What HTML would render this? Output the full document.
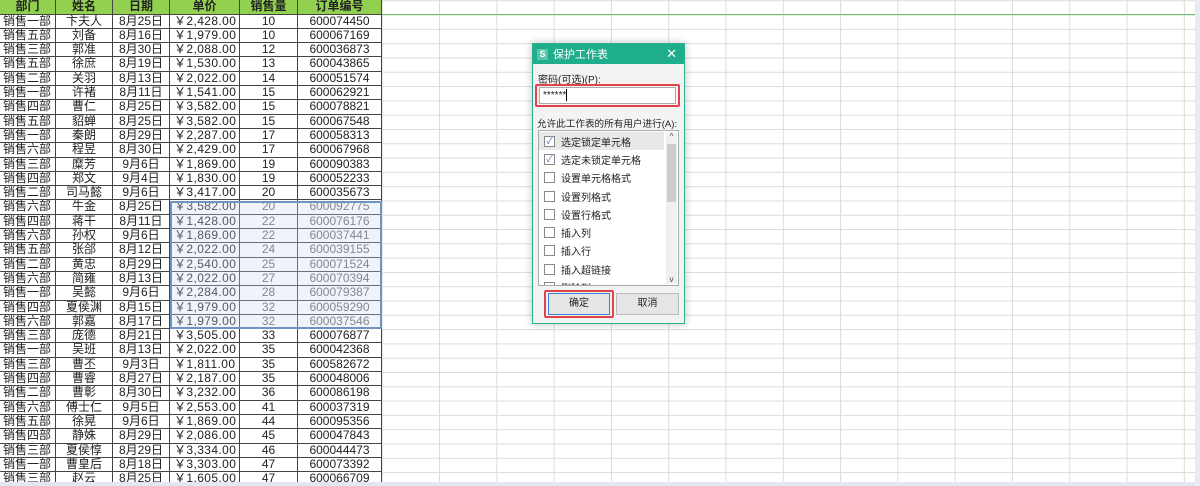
<!DOCTYPE html>
<html><head><meta charset="utf-8"><style>
*{margin:0;padding:0;box-sizing:border-box}
body{width:1200px;height:486px;overflow:hidden;background:#fff;position:relative;font-family:"Liberation Sans","Noto Sans CJK SC",sans-serif;font-size:12px;color:#222}
.grid{position:absolute;left:382px;top:0;width:818px;height:486px;
background-image:linear-gradient(to right,#dcdcdc 1px,transparent 1px),linear-gradient(to bottom,#dcdcdc 1px,transparent 1px);
background-size:57.3px 14.3px;background-position:57px 0.3px}
.gline{position:absolute;left:382px;top:14px;width:815px;height:1px;background:#6cc06c}
.tbl{position:absolute;left:0;top:0;width:382px}
.r{display:flex;height:14.3px;line-height:13px;border-bottom:1px solid #444}
.r.h{height:14.6px;background:#92d050;font-weight:bold;line-height:13px;border-bottom:1px solid #444}
.r div{border-right:1px solid #444;white-space:nowrap;overflow:hidden;font-size:12px}
.c1{width:56px;padding-left:3px}
.c2{width:57px;text-align:center}
.c3{width:57px;text-align:center}
.r .c4{width:70px;padding-left:4px;letter-spacing:0.4px}
.c5{width:58px;text-align:center}
.c6{width:84px;text-align:center}
.h div{text-align:center;padding-left:0}
.sel{position:absolute;left:170px;top:200.5px;width:212px;height:128.7px;background:rgba(200,218,235,0.3);border:2px solid #6f93c3}
.gt{color:#666}
.dlg{position:absolute;left:532px;top:43px;width:153px;height:281px;background:#f3f3f3;border:1px solid #2bb08f;box-shadow:0 0 8px rgba(0,0,0,.25)}
.tb{height:20px;background:#1fae8b;color:#fff;display:flex;align-items:center;font-size:11px}
.ico{width:11px;height:11px;background:#59c5a8;color:#fff;font-size:9px;line-height:11px;text-align:center;margin:0 5px 0 4px;font-weight:bold}
.x{position:absolute;right:7px;top:2px;color:#fff;font-size:13px}
.lab{position:absolute;font-size:10px;color:#222;white-space:nowrap}
.chk{display:flex;align-items:center;height:18.3px;font-size:10px}
.bx{width:11px;height:11px;border:1px solid #888;background:#fff;margin:0 6px 0 5px;font-size:9px;line-height:9px;color:#3b74c7;text-align:center}
</style></head><body>
<div class="grid"></div>
<div class="gline"></div>
<div class="tbl">
<div class="r h"><div class="c1">部门</div><div class="c2">姓名</div><div class="c3">日期</div><div class="c4" style="letter-spacing:0;padding-left:0">单价</div><div class="c5">销售量</div><div class="c6">订单编号</div></div>
<div class="r"><div class="c1">销售一部</div><div class="c2">卞夫人</div><div class="c3">8月25日</div><div class="c4">￥2,428.00</div><div class="c5">10</div><div class="c6">600074450</div></div>
<div class="r"><div class="c1">销售五部</div><div class="c2">刘备</div><div class="c3">8月16日</div><div class="c4">￥1,979.00</div><div class="c5">10</div><div class="c6">600067169</div></div>
<div class="r"><div class="c1">销售三部</div><div class="c2">郭准</div><div class="c3">8月30日</div><div class="c4">￥2,088.00</div><div class="c5">12</div><div class="c6">600036873</div></div>
<div class="r"><div class="c1">销售五部</div><div class="c2">徐庶</div><div class="c3">8月19日</div><div class="c4">￥1,530.00</div><div class="c5">13</div><div class="c6">600043865</div></div>
<div class="r"><div class="c1">销售二部</div><div class="c2">关羽</div><div class="c3">8月13日</div><div class="c4">￥2,022.00</div><div class="c5">14</div><div class="c6">600051574</div></div>
<div class="r"><div class="c1">销售一部</div><div class="c2">许褚</div><div class="c3">8月11日</div><div class="c4">￥1,541.00</div><div class="c5">15</div><div class="c6">600062921</div></div>
<div class="r"><div class="c1">销售四部</div><div class="c2">曹仁</div><div class="c3">8月25日</div><div class="c4">￥3,582.00</div><div class="c5">15</div><div class="c6">600078821</div></div>
<div class="r"><div class="c1">销售五部</div><div class="c2">貂蝉</div><div class="c3">8月25日</div><div class="c4">￥3,582.00</div><div class="c5">15</div><div class="c6">600067548</div></div>
<div class="r"><div class="c1">销售一部</div><div class="c2">秦朗</div><div class="c3">8月29日</div><div class="c4">￥2,287.00</div><div class="c5">17</div><div class="c6">600058313</div></div>
<div class="r"><div class="c1">销售六部</div><div class="c2">程昱</div><div class="c3">8月30日</div><div class="c4">￥2,429.00</div><div class="c5">17</div><div class="c6">600067968</div></div>
<div class="r"><div class="c1">销售三部</div><div class="c2">糜芳</div><div class="c3">9月6日</div><div class="c4">￥1,869.00</div><div class="c5">19</div><div class="c6">600090383</div></div>
<div class="r"><div class="c1">销售四部</div><div class="c2">郑文</div><div class="c3">9月4日</div><div class="c4">￥1,830.00</div><div class="c5">19</div><div class="c6">600052233</div></div>
<div class="r"><div class="c1">销售二部</div><div class="c2">司马懿</div><div class="c3">9月6日</div><div class="c4">￥3,417.00</div><div class="c5">20</div><div class="c6">600035673</div></div>
<div class="r"><div class="c1">销售六部</div><div class="c2">牛金</div><div class="c3">8月25日</div><div class="c4">￥3,582.00</div><div class="c5 gt">20</div><div class="c6 gt">600092775</div></div>
<div class="r"><div class="c1">销售四部</div><div class="c2">蒋干</div><div class="c3">8月11日</div><div class="c4">￥1,428.00</div><div class="c5 gt">22</div><div class="c6 gt">600076176</div></div>
<div class="r"><div class="c1">销售六部</div><div class="c2">孙权</div><div class="c3">9月6日</div><div class="c4">￥1,869.00</div><div class="c5 gt">22</div><div class="c6 gt">600037441</div></div>
<div class="r"><div class="c1">销售五部</div><div class="c2">张郃</div><div class="c3">8月12日</div><div class="c4">￥2,022.00</div><div class="c5 gt">24</div><div class="c6 gt">600039155</div></div>
<div class="r"><div class="c1">销售二部</div><div class="c2">黄忠</div><div class="c3">8月29日</div><div class="c4">￥2,540.00</div><div class="c5 gt">25</div><div class="c6 gt">600071524</div></div>
<div class="r"><div class="c1">销售六部</div><div class="c2">简雍</div><div class="c3">8月13日</div><div class="c4">￥2,022.00</div><div class="c5 gt">27</div><div class="c6 gt">600070394</div></div>
<div class="r"><div class="c1">销售一部</div><div class="c2">吴懿</div><div class="c3">9月6日</div><div class="c4">￥2,284.00</div><div class="c5 gt">28</div><div class="c6 gt">600079387</div></div>
<div class="r"><div class="c1">销售四部</div><div class="c2">夏侯渊</div><div class="c3">8月15日</div><div class="c4">￥1,979.00</div><div class="c5 gt">32</div><div class="c6 gt">600059290</div></div>
<div class="r"><div class="c1">销售六部</div><div class="c2">郭嘉</div><div class="c3">8月17日</div><div class="c4">￥1,979.00</div><div class="c5 gt">32</div><div class="c6 gt">600037546</div></div>
<div class="r"><div class="c1">销售三部</div><div class="c2">庞德</div><div class="c3">8月21日</div><div class="c4">￥3,505.00</div><div class="c5">33</div><div class="c6">600076877</div></div>
<div class="r"><div class="c1">销售一部</div><div class="c2">吴班</div><div class="c3">8月13日</div><div class="c4">￥2,022.00</div><div class="c5">35</div><div class="c6">600042368</div></div>
<div class="r"><div class="c1">销售三部</div><div class="c2">曹丕</div><div class="c3">9月3日</div><div class="c4">￥1,811.00</div><div class="c5">35</div><div class="c6">600582672</div></div>
<div class="r"><div class="c1">销售四部</div><div class="c2">曹睿</div><div class="c3">8月27日</div><div class="c4">￥2,187.00</div><div class="c5">35</div><div class="c6">600048006</div></div>
<div class="r"><div class="c1">销售二部</div><div class="c2">曹彰</div><div class="c3">8月30日</div><div class="c4">￥3,232.00</div><div class="c5">36</div><div class="c6">600086198</div></div>
<div class="r"><div class="c1">销售六部</div><div class="c2">傅士仁</div><div class="c3">9月5日</div><div class="c4">￥2,553.00</div><div class="c5">41</div><div class="c6">600037319</div></div>
<div class="r"><div class="c1">销售五部</div><div class="c2">徐晃</div><div class="c3">9月6日</div><div class="c4">￥1,869.00</div><div class="c5">44</div><div class="c6">600095356</div></div>
<div class="r"><div class="c1">销售四部</div><div class="c2">静姝</div><div class="c3">8月29日</div><div class="c4">￥2,086.00</div><div class="c5">45</div><div class="c6">600047843</div></div>
<div class="r"><div class="c1">销售三部</div><div class="c2">夏侯惇</div><div class="c3">8月29日</div><div class="c4">￥3,334.00</div><div class="c5">46</div><div class="c6">600044473</div></div>
<div class="r"><div class="c1">销售一部</div><div class="c2">曹皇后</div><div class="c3">8月18日</div><div class="c4">￥3,303.00</div><div class="c5">47</div><div class="c6">600073392</div></div>
<div class="r"><div class="c1">销售三部</div><div class="c2">赵云</div><div class="c3">8月25日</div><div class="c4">￥1,605.00</div><div class="c5">47</div><div class="c6">600066709</div></div>
</div>
<div class="sel"></div>
<div style="position:absolute;left:0;top:482px;width:1200px;height:4px;background:#e2e8f2"></div>
<div style="position:absolute;left:1195px;top:0;width:5px;height:486px;background:#e8ecf2"></div>

<div class="dlg">
<div class="tb"><div class="ico">S</div>保护工作表<span class="x">✕</span></div>
<div class="lab" style="left:5px;top:27px">密码(可选)(P):</div>
<div style="position:absolute;left:2px;top:40px;width:145px;height:23px;border:2px solid #e0444a;border-radius:2px"></div>
<div style="position:absolute;left:6px;top:43px;width:137px;height:17px;background:#fff;border:1px solid #aaa;font-size:10px;line-height:15px;padding-left:3px">******<span style="display:inline-block;width:1px;height:12px;background:#000;vertical-align:middle"></span></div>
<div class="lab" style="left:4px;top:72px;font-size:9.6px">允许此工作表的所有用户进行(A):</div>
<div style="position:absolute;left:5px;top:86px;width:141px;height:156px;background:#fff;border:1px solid #aaa;overflow:hidden">
<div style="position:absolute;right:1px;top:1px;width:11px;height:152px;background:#f0f0f0;font-size:8px;text-align:center;color:#444"><div style="height:12px">^</div><div style="height:58px;background:#cdcdcd;margin:0 1px"></div><div style="position:absolute;bottom:0;width:11px">v</div></div>
<div style="padding-top:1px">
<div class="chk" style="background:#e8e8e8;margin-right:14px"><div class="bx">✓</div>选定锁定单元格</div>
<div class="chk"><div class="bx">✓</div>选定未锁定单元格</div>
<div class="chk"><div class="bx"></div>设置单元格格式</div>
<div class="chk"><div class="bx"></div>设置列格式</div>
<div class="chk"><div class="bx"></div>设置行格式</div>
<div class="chk"><div class="bx"></div>插入列</div>
<div class="chk"><div class="bx"></div>插入行</div>
<div class="chk"><div class="bx"></div>插入超链接</div>
<div class="chk"><div class="bx"></div>删除列</div>
</div></div>
<div style="position:absolute;left:11px;top:246px;width:70px;height:28px;border:2px solid #e0444a;border-radius:2px"></div>
<div style="position:absolute;left:15px;top:249px;width:62px;height:22px;background:#e5e5e5;border:1px solid #3c7fd4;font-size:10px;text-align:center;line-height:20px">确定</div>
<div style="position:absolute;left:83px;top:249px;width:63px;height:22px;background:#e5e5e5;border:1px solid #bbb;font-size:10px;text-align:center;line-height:20px">取消</div>
</div>
</body></html>
